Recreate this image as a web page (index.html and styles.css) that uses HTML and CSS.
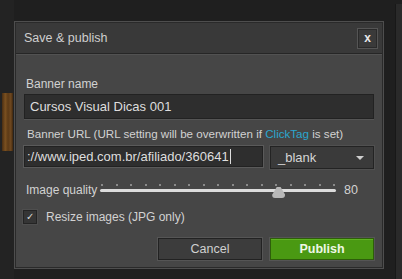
FILE: index.html
```html
<!DOCTYPE html>
<html lang="en">
<head>
    <meta charset="UTF-8">
    <meta name="viewport" content="width=device-width, initial-scale=1.0">
    <title>Save &amp; publish</title>
    <link rel="stylesheet" href="styles.css">
</head>
<body>

<div class="page">
    <div class="side-left">
        <div class="wood"></div>
    </div>

    <div class="dialog">
        <div class="dialog-inner">
            <div class="title-bar">
                <span class="title">Save &amp; publish</span>
                <button class="close">x</button>
            </div>

            <div class="dialog-body">
                <label class="field-label" for="name">Banner name</label>
                <input class="text-input" id="name" type="text" value="Cursos Visual Dicas 001">

                <label class="field-label url-label" for="url">Banner URL (URL setting will be overwritten if <span class="link">ClickTag</span> is set)</label>
                <div class="url-row">
                    <div class="text-input url-input" id="url">://www.iped.com.br/afiliado/360641<span class="caret"></span></div>
                    <div class="select">
                        <span>_blank</span>
                        <span class="arrow"></span>
                    </div>
                </div>

                <div class="slider-row">
                    <span class="slider-label">Image quality</span>
                    <div class="slider">
                        <div class="ticks">
                            <i></i><i></i><i></i><i></i><i></i><i></i><i></i><i></i><i></i>
                            <i></i><i></i><i></i><i></i><i></i><i></i><i></i><i></i>
                        </div>
                        <div class="track"></div>
                        <div class="thumb" style="left: 75.5%"></div>
                    </div>
                    <span class="slider-value">80</span>
                </div>

                <div class="check-row">
                    <span class="checkbox">&#10003;</span>
                    <span>Resize images (JPG only)</span>
                </div>

                <div class="buttons">
                    <button class="btn cancel">Cancel</button>
                    <button class="btn publish">Publish</button>
                </div>
            </div>
        </div>
    </div>

    <div class="side-right"></div>
</div>

</body>
</html>
```

FILE: styles.css
```css
body {
    margin: 0;
    padding: 0;
    background-color: #1f1f1f;
    font-family: "Liberation Sans", Arial, sans-serif;
    color: #d2d2d2;
    width: 402px;
    height: 279px;
    overflow: hidden;
}
.page {
    display: flex;
    height: 279px;
}
.side-left {
    width: 14px;
    background-color: #232323;
    padding-top: 93px;
    box-sizing: border-box;
}
.wood {
    margin-left: 2px;
    width: 11px;
    height: 58px;
    background: linear-gradient(90deg, #4a2e12, #7a5020 30%, #5c3a16 55%, #6e4820 80%, #3e260e);
}
.dialog {
    width: 370px;
    height: 248px;
    margin-top: 21px;
    border: 1px solid #4e4e4e;
    box-sizing: border-box;
}
.dialog-inner {
    height: 100%;
    border: 1px solid #2a2a2a;
    box-sizing: border-box;
    background-color: #464646;
}
.title-bar {
    display: flex;
    align-items: center;
    justify-content: space-between;
    height: 30px;
    padding: 0 4px 0 8px;
    background-color: #393939;
    border-bottom: 1px solid #262626;
    box-shadow: 0 1px 0 #525252;
}
.title {
    font-size: 12.5px;
    color: #cfcfcf;
}
.close {
    width: 21px;
    height: 21px;
    margin-top: 1px;
    padding: 0;
    background-color: #3a3a3a;
    border: 1px solid #555;
    box-shadow: inset 0 0 0 1px #2a2a2a;
    color: #e8e8e8;
    font-family: "Liberation Sans", Arial, sans-serif;
    font-weight: bold;
    font-size: 12px;
    line-height: 17px;
}
.dialog-body {
    padding: 23px 8px 0 8px;
}
.field-label {
    display: block;
    height: 14px;
    line-height: 14px;
    padding-left: 2px;
    font-size: 12px;
    margin-bottom: 3px;
}
.url-label {
    margin-top: 8px;
    margin-bottom: 4px;
    padding-left: 3px;
    font-size: 11.6px;
}
.link {
    color: #2aa6cf;
}
.text-input {
    display: block;
    width: 100%;
    height: 25px;
    box-sizing: border-box;
    padding: 0 5px;
    background-color: #2e2e2e;
    border: 1px solid #222;
    box-shadow: 0 1px 0 #555;
    color: #dedede;
    font-family: "Liberation Sans", Arial, sans-serif;
    font-size: 13px;
    line-height: 23px;
    outline: none;
}
.url-row {
    display: flex;
    gap: 6px;
}
.url-input {
    width: 241px;
    height: 23px;
    line-height: 21px;
    padding-left: 3px;
    margin-left: -1px;
    border: 1px solid #5a5a5a;
    box-shadow: inset 0 0 0 1px #222;
    white-space: nowrap;
    overflow: hidden;
}
.caret {
    display: inline-block;
    width: 1px;
    height: 15px;
    margin-left: 1px;
    vertical-align: -3px;
    background-color: #ddd;
}
.select {
    flex: 1;
    display: flex;
    align-items: center;
    justify-content: space-between;
    height: 21px;
    margin-top: 1px;
    padding: 0 9px 0 7px;
    background-color: #3a3a3a;
    border: 1px solid #232323;
    box-shadow: 0 0 0 1px #505050;
    font-size: 13px;
    color: #d6d6d6;
}
.arrow {
    width: 0;
    height: 0;
    border-left: 4px solid transparent;
    border-right: 4px solid transparent;
    border-top: 4px solid #cfcfcf;
}
.slider-row {
    display: flex;
    align-items: center;
    height: 20px;
    margin-top: 11px;
}
.slider-label {
    width: 76px;
    padding-left: 2px;
    box-sizing: border-box;
    font-size: 12px;
}
.slider {
    position: relative;
    flex: 1;
    height: 20px;
}
.ticks {
    display: flex;
    justify-content: space-between;
    padding: 0 1px;
    margin-top: 4px;
    height: 2px;
}
.ticks i {
    width: 2px;
    height: 2px;
    background-color: #8a8a8a;
}
.track {
    height: 3px;
    margin-top: 3px;
    background-color: #dcdcdc;
    border-radius: 2px;
}
.thumb {
    position: absolute;
    top: 7px;
    width: 13px;
    height: 11px;
    margin-left: -6px;
    background-color: #b8b8b8;
    clip-path: polygon(35% 0, 65% 0, 100% 70%, 100% 100%, 0 100%, 0 70%);
    border-radius: 0 0 3px 3px;
}
.slider-value {
    width: 30px;
    padding-left: 8px;
    font-size: 12.5px;
}
.check-row {
    display: flex;
    align-items: center;
    gap: 9px;
    height: 14px;
    margin-top: 10px;
    font-size: 12px;
}
.checkbox {
    width: 14px;
    height: 14px;
    margin-left: -1px;
    box-sizing: border-box;
    background-color: #353535;
    border: 1px solid #242424;
    box-shadow: 0 0 0 1px #4e4e4e;
    font-size: 10px;
    line-height: 12px;
    text-align: center;
    color: #d8d8d8;
}
.buttons {
    display: flex;
    justify-content: flex-end;
    gap: 8px;
    margin-top: 14px;
}
.btn {
    width: 104px;
    height: 22px;
    padding: 0;
    font-family: "Liberation Sans", Arial, sans-serif;
    font-size: 12.5px;
}
.cancel {
    background-color: #3c3c3c;
    border: 1px solid #222;
    box-shadow: 0 0 0 1px #555;
    color: #d0d0d0;
}
.publish {
    background-color: #4a9912;
    border: 1px solid #2e5e0a;
    box-shadow: 0 0 0 1px #555, inset 0 1px 0 #5fb322;
    color: #eef7e6;
    font-weight: bold;
}
.side-right {
    flex: 1;
    display: flex;
    justify-content: flex-end;
}
.side-right::after {
    content: "";
    width: 6px;
    margin-top: 4px;
    background-color: #2a2a2a;
    border-left: 1px solid #181818;
}
```
